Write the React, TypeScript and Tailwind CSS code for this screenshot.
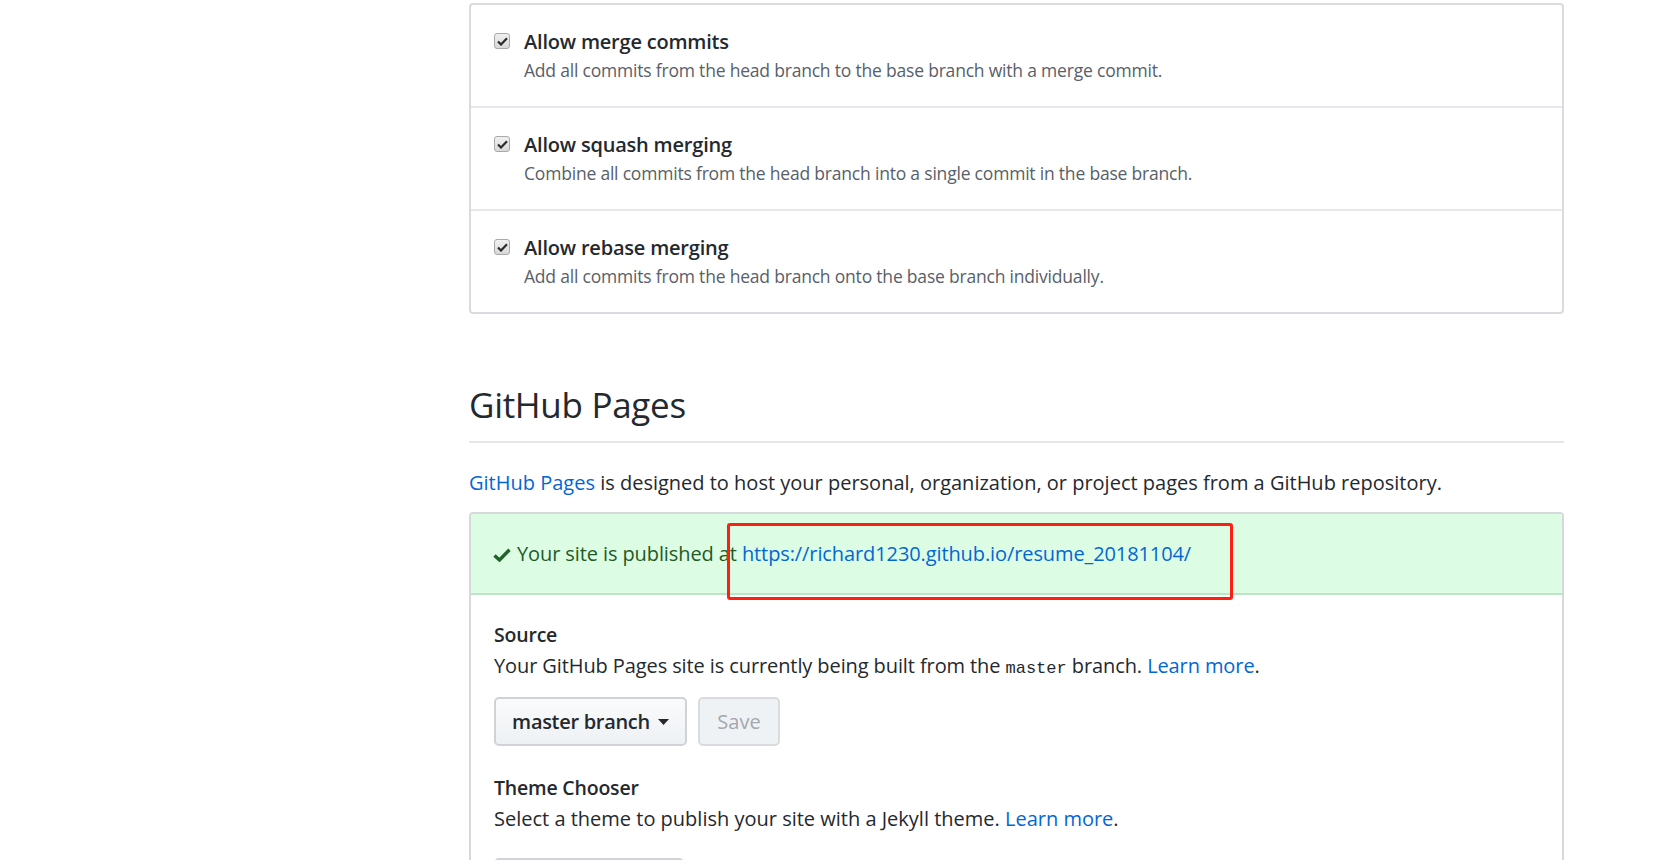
import React from "react";

const options = [
  {
    title: "Allow merge commits",
    desc: "Add all commits from the head branch to the base branch with a merge commit.",
  },
  {
    title: "Allow squash merging",
    desc: "Combine all commits from the head branch into a single commit in the base branch.",
  },
  {
    title: "Allow rebase merging",
    desc: "Add all commits from the head branch onto the base branch individually.",
  },
];

function CheckBox() {
  return (
    <span className="mt-[6px] flex h-[16px] w-[16px] shrink-0 items-center justify-center rounded-[3px] border border-[#a9a9a9] bg-gradient-to-b from-[#f0f0f0] to-[#d9d9d9]">
      <svg width="11" height="9" viewBox="0 0 11 9">
        <path d="M1 4.5 L4 7.5 L10 1.2" fill="none" stroke="#2b2b2b" strokeWidth="2.2" />
      </svg>
    </span>
  );
}

export default function App() {
  return (
    <div className="h-[860px] w-full overflow-hidden bg-white font-['Open_Sans',sans-serif] text-[#24292e]">
      <div className="ml-[469px] w-[1095px]">
        {/* merge options */}
        <div className="mt-[3px] rounded-[4px] border-2 border-[#d9dcdf]">
          {options.map((o, i) => (
            <div
              key={o.title}
              className={
                "flex gap-[14px] pl-[23px] pt-[22px] pb-[23px] " +
                (i > 0 ? "border-t-2 border-[#e6e8eb]" : "")
              }
            >
              <CheckBox />
              <div>
                <div className="text-[20px] leading-[30px] font-semibold tracking-[-0.2px]">{o.title}</div>
                <div className="text-[17.5px] leading-[26px] text-[#586069] tracking-[-0.2px]">{o.desc}</div>
              </div>
            </div>
          ))}
        </div>

        {/* GitHub Pages */}
        <h2 className="mt-[68px] border-b-2 border-[#e4e7ea] pb-[13px] text-[35px] leading-[46px] font-normal tracking-[-0.3px]">
          GitHub Pages
        </h2>
        <p className="mt-[25px] text-[20px] leading-[30px]">
          <span className="text-[#0366d6]">GitHub Pages</span> is designed to host your personal,
          organization, or project pages from a GitHub repository.
        </p>

        <div className="relative mt-[14px] rounded-t-[4px] border-x-2 border-t-2 border-[#d6d9dc]">
          <div className="flex items-center gap-[6px] border-b-2 border-[#bfe3c7] bg-[#dcfde3] pl-[22px] h-[81px] text-[20px] tracking-[-0.1px] text-[#1f5a27]">
            <svg width="18" height="14" viewBox="0 0 18 14" className="mt-[3px]">
              <path d="M1.5 7.5 L6.5 12 L16.5 1.8" fill="none" stroke="#22632c" strokeWidth="3.4" />
            </svg>
            <span>
              Your site is published at{" "}
              <span className="text-[#0366d6]">https://richard1230.github.io/resume_20181104/</span>
            </span>
          </div>
          {/* red annotation box */}
          <div className="absolute left-[256px] top-[9px] h-[77px] w-[506px] rounded-[3px] border-[3px] border-[#ff1e12]"></div>

          <div className="px-[23px] pt-[25px]">
            <div className="text-[19.5px] leading-[30px] font-semibold tracking-[-0.2px]">Source</div>
            <div className="mt-[1px] text-[20px] leading-[30px] tracking-[-0.1px]">
              Your GitHub Pages site is currently being built from the{" "}
              <span className="font-['Liberation_Mono',monospace] text-[17px] tracking-normal">master</span> branch.{" "}
              <span className="text-[#0366d6]">Learn more</span>.
            </div>
            <div className="mt-[13px] flex gap-[11px]">
              <button className="flex h-[49px] w-[193px] items-center justify-center gap-[8px] rounded-[5px] border-2 border-[#cfd3d7] bg-gradient-to-b from-[#fafbfc] to-[#eef1f4] text-[20px] font-semibold tracking-[-0.3px]">
                master branch
                <svg width="11" height="6" viewBox="0 0 11 6">
                  <path d="M0 0 L11 0 L5.5 6 Z" fill="#24292e" />
                </svg>
              </button>
              <button className="h-[49px] w-[82px] rounded-[5px] border-2 border-[#d9dcdf] bg-[#eff2f5] text-[20px] text-[#a2a8ae]">
                Save
              </button>
            </div>
            <div className="mt-[27px] text-[19.5px] leading-[30px] font-semibold tracking-[-0.2px]">Theme Chooser</div>
            <div className="mt-[1px] text-[20px] leading-[30px]">
              Select a theme to publish your site with a Jekyll theme.{" "}
              <span className="text-[#0366d6]">Learn more</span>.
            </div>
            <div className="mt-[24px] h-[49px] w-[190px] rounded-[5px] border-2 border-[#cfd3d7] bg-[#fafbfc]"></div>
          </div>
        </div>
      </div>
    </div>
  );
}
